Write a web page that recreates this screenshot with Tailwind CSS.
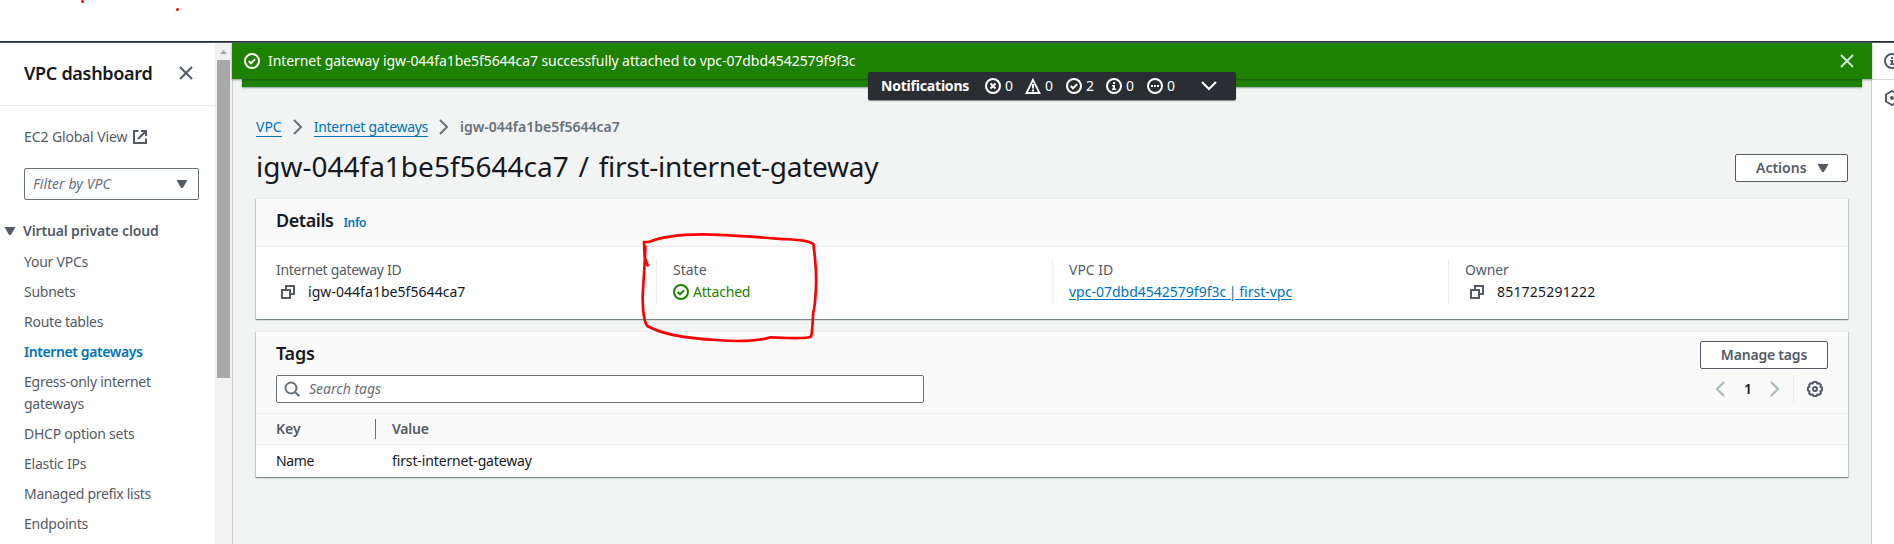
<!DOCTYPE html>
<html lang="en">
<head>
<meta charset="utf-8">
<title>VPC dashboard</title>
<script src="https://cdn.jsdelivr.net/npm/@tailwindcss/browser@4"></script>
</head>
<body class="relative flex h-[544px] w-[1894px] flex-col overflow-hidden bg-white font-['Noto_Sans',sans-serif] text-[14px] leading-[22px] text-[#16191f]">

<svg class="hidden">
  <defs>
    <symbol id="check" viewBox="0 0 16 16"><g fill="none" stroke="currentColor" stroke-width="2"><circle cx="8" cy="8" r="7"/><path d="M4.7 8l2.3 2.3 4.2-4.2"/></g></symbol>
    <symbol id="err" viewBox="0 0 16 16"><g fill="none" stroke="currentColor" stroke-width="2"><circle cx="8" cy="8" r="7"/><path d="M5.500 5.500l5 5M10.500 5.500l-5 5"/></g></symbol>
    <symbol id="warn" viewBox="0 0 16 16"><path d="M8 1.800l6.500 13.200h-13z" fill="none" stroke="currentColor" stroke-width="1.800"/><path d="M8 6v4.500M8 11.500v2" stroke="currentColor" stroke-width="2"/></symbol>
    <symbol id="info" viewBox="0 0 16 16"><circle cx="8" cy="8" r="7" fill="none" stroke="currentColor" stroke-width="2"/><path d="M7 4h2v2H7zM6 7h3v3.500h1V12H6v-1.500h1V8.500H6z" fill="currentColor"/></symbol>
    <symbol id="prog" viewBox="0 0 16 16"><circle cx="8" cy="8" r="7" fill="none" stroke="currentColor" stroke-width="2"/><path d="M4 7h2v2H4zM7 7h2v2H7zM10 7h2v2h-2z" fill="currentColor"/></symbol>
    <symbol id="close" viewBox="0 0 16 16"><path d="M2 2l12 12M14 2L2 14" fill="none" stroke="currentColor" stroke-width="2"/></symbol>
    <symbol id="copy" viewBox="0 0 16 16"><g fill="none" stroke="currentColor" stroke-width="2"><path d="M2 6h8v8H2z"/><path d="M6 6V2h8v8h-4"/></g></symbol>
    <symbol id="caret" viewBox="0 0 10 8"><path d="M0 0h10v1L5.800 8H4.200L0 1z" fill="currentColor"/></symbol>
    <symbol id="right" viewBox="0 0 16 16"><path d="M4 1l7 7-7 7" fill="none" stroke="currentColor" stroke-width="2"/></symbol>
  </defs>
</svg>

<div class="h-[43px] shrink-0 border-b border-[#545b64]"><div class="h-[42px] border-b border-[#232f3e]"></div></div>

<div class="flex min-h-0 flex-1">
  <nav class="flex w-[215px] shrink-0 flex-col text-[#545b64]">
    <div class="flex h-[63px] items-center justify-between border-b border-[#eaeded] pr-[21px] pb-[2px] pl-6">
      <h2 class="text-[18px] font-semibold tracking-[-0.3px] text-[#16191f]">VPC dashboard</h2>
      <svg class="size-4"><use href="#close"/></svg>
    </div>
    <div class="mt-5 flex items-center pl-6">
      <span class="tracking-[-0.1px]">EC2 Global View</span>
      <svg class="ml-[5px] size-4" viewBox="0 0 16 16" fill="none" stroke="currentColor" stroke-width="2"><path d="M6.500 2H2v12h12V9.500M9 2h5v5M14 2L6 10"/></svg>
    </div>
    <div class="mt-5 ml-6 flex h-8 w-[175px] items-center justify-between rounded-[2px] border border-[#687078] pr-[11px] pl-2 text-[#687078]">
      <span class="tracking-[0.1px] italic">Filter by VPC</span>
      <svg class="h-2 w-[10px] text-[#545b64]"><use href="#caret"/></svg>
    </div>
    <div class="mt-5 flex items-center pl-[5px]">
      <svg class="h-2 w-[10px]"><use href="#caret"/></svg>
      <span class="ml-2 font-semibold tracking-[-0.15px]">Virtual private cloud</span>
    </div>
    <ul class="mt-[9px] flex flex-col gap-2 pl-6 tracking-[-0.25px]">
      <li>Your VPCs</li>
      <li>Subnets</li>
      <li>Route tables</li>
      <li class="font-semibold tracking-[-0.41px] text-[#0073bb]">Internet gateways</li>
      <li>Egress-only internet<br>gateways</li>
      <li>DHCP option sets</li>
      <li>Elastic IPs</li>
      <li class="tracking-[-0.3px]">Managed prefix lists</li>
      <li>Endpoints</li>
    </ul>
  </nav>

  <div class="flex w-[17px] shrink-0 flex-col items-center bg-[#f1f1f1]">
    <svg class="mt-[7px] h-1 w-[7px]" viewBox="0 0 7 4"><path d="M3.500 0L7 4H0z" fill="#a3a3a3"/></svg>
    <div class="mt-[6px] h-[318px] w-[13px] bg-[#a8a8a8]"></div>
  </div>

  <main class="relative flex w-[1640px] shrink-0 flex-col border-x border-[#c8cccd] bg-[#f2f3f3]">
    <div class="relative z-10 -mx-px flex h-9 shrink-0 items-center bg-[#1d8102] px-3 pb-px text-white shadow-[0_1px_2px_rgba(0,28,36,0.4)]">
      <svg class="size-4"><use href="#check"/></svg>
      <span class="ml-2 tracking-[-0.07px]">Internet gateway igw-044fa1be5f5644ca7 successfully attached to vpc-07dbd4542579f9f3c</span>
      <svg class="mr-[5px] ml-auto size-4 text-[#d5e6d0]"><use href="#close"/></svg>
    </div>
    <div class="mx-[9px] h-2 shrink-0 bg-[#1d8102] shadow-[0_1px_2px_rgba(0,28,36,0.4)]"></div>

    <div class="absolute top-[29px] left-[635px] z-20 flex h-7 w-[368px] items-center rounded-[2px] bg-[#2a2e33] pl-[13px] text-white shadow-[0_1px_1px_rgba(0,28,36,0.5)]">
      <span class="w-[104px] font-bold tracking-[-0.2px]">Notifications</span>
      <span class="flex w-10 items-center gap-1"><svg class="size-4"><use href="#err"/></svg>0</span>
      <span class="flex w-[41px] items-center gap-1"><svg class="size-4"><use href="#warn"/></svg>0</span>
      <span class="flex w-10 items-center gap-1"><svg class="size-4"><use href="#check"/></svg>2</span>
      <span class="flex w-[41px] items-center gap-1"><svg class="size-4"><use href="#info"/></svg>0</span>
      <span class="flex w-[54px] items-center gap-1"><svg class="size-4"><use href="#prog"/></svg>0</span>
      <svg class="size-4" viewBox="0 0 16 16"><path d="M1 4l7 7 7-7" fill="none" stroke="currentColor" stroke-width="2"/></svg>
    </div>

    <div class="flex flex-col px-[23px] pt-[29px]">
      <div class="flex h-[22px] items-center text-[#687078]">
        <a class="h-[21px] self-start border-b border-[#0073bb] leading-[21px] text-[#0073bb]">VPC</a>
        <svg class="mx-2 size-4"><use href="#right"/></svg>
        <a class="h-[21px] self-start border-b border-[#0073bb] leading-[21px] tracking-[-0.29px] text-[#0073bb]">Internet gateways</a>
        <svg class="mx-2 size-4"><use href="#right"/></svg>
        <span class="font-semibold">igw-044fa1be5f5644ca7</span>
      </div>
      <div class="mt-[10px] flex h-9 items-start justify-between">
        <h1 class="text-[28px] leading-9 [word-spacing:2.5px]">igw-044fa1be5f5644ca7 / <span class="tracking-[-0.27px]">first-internet-gateway</span></h1>
        <button class="mt-[6px] flex h-7 w-[113px] items-center justify-between rounded-[2px] border border-[#545b64] bg-white pr-[19px] pl-5 font-semibold text-[#545b64]"><span>Actions</span><svg class="h-2 w-[10px]"><use href="#caret"/></svg></button>
      </div>

      <section class="mt-[14px] h-[121px] border-t border-[#eaeded] bg-white shadow-[0_1px_1px_0_rgba(0,28,36,0.3),1px_1px_1px_0_rgba(0,28,36,0.15),-1px_1px_1px_0_rgba(0,28,36,0.15)]">
        <div class="flex h-12 items-baseline border-b border-[#eaeded] bg-[#fafafa] pt-[10px] pl-5">
          <h2 class="text-[18px] font-semibold tracking-[-0.45px]">Details</h2>
          <a class="ml-[10px] text-[12px] font-semibold tracking-[-0.3px] text-[#0073bb]">Info</a>
        </div>
        <div class="mt-3 flex h-11 pl-1">
          <div class="w-[396px] shrink-0 pl-4">
            <div class="tracking-[-0.3px] text-[#545b64]">Internet gateway ID</div>
            <div class="flex items-center tracking-[0.05px]"><svg class="mr-3 ml-1 size-4 text-[#545b64]"><use href="#copy"/></svg>igw-044fa1be5f5644ca7</div>
          </div>
          <div class="w-[396px] shrink-0 border-l border-[#eaeded] pl-4">
            <div class="text-[#545b64]">State</div>
            <div class="flex items-center tracking-[-0.19px] text-[#1d8102]"><svg class="mr-1 size-4"><use href="#check"/></svg>Attached</div>
          </div>
          <div class="w-[396px] shrink-0 border-l border-[#eaeded] pl-4">
            <div class="text-[#545b64]">VPC ID</div>
            <a class="text-[#0073bb] underline underline-offset-2 [word-spacing:-1px]">vpc-07dbd4542579f9f3c | first-vpc</a>
          </div>
          <div class="w-[396px] shrink-0 border-l border-[#eaeded] pl-4">
            <div class="tracking-[-0.1px] text-[#545b64]">Owner</div>
            <div class="flex items-center tracking-[0.2px]"><svg class="mr-3 ml-1 size-4 text-[#545b64]"><use href="#copy"/></svg>851725291222</div>
          </div>
        </div>
      </section>

      <section class="mt-3 h-[146px] border-t border-[#eaeded] bg-white shadow-[0_1px_1px_0_rgba(0,28,36,0.3),1px_1px_1px_0_rgba(0,28,36,0.15),-1px_1px_1px_0_rgba(0,28,36,0.15)]">
        <div class="h-[82px] border-b border-[#eaeded] bg-[#fafafa] px-5 pt-[9px]">
          <div class="flex h-7 items-center justify-between">
            <h2 class="pb-1 text-[18px] font-semibold tracking-[-0.2px]">Tags</h2>
            <button class="h-7 w-32 rounded-[2px] border border-[#545b64] bg-white font-semibold tracking-[-0.2px] text-[#545b64]">Manage tags</button>
          </div>
          <div class="mt-[6px] flex h-7 items-center justify-between">
            <div class="flex h-7 w-[648px] items-center rounded-[2px] border border-[#687078] bg-white pl-[7px] text-[#687078]">
              <svg class="mr-[9px] size-4" viewBox="0 0 16 16" fill="none" stroke="currentColor" stroke-width="2"><circle cx="7" cy="7" r="5.500"/><path d="M10.800 10.800l4.500 4.500"/></svg>
              <span class="italic">Search tags</span>
            </div>
            <div class="flex h-7 items-center pr-[5px]">
              <svg class="size-4 text-[#aab7b8]" viewBox="0 0 16 16"><path d="M12 1L5 8l7 7" fill="none" stroke="currentColor" stroke-width="2"/></svg>
              <span class="w-[39px] pl-px text-center font-semibold">1</span>
              <svg class="mr-[10px] size-4 text-[#aab7b8]"><use href="#right"/></svg>
              <div class="mr-[13px] h-7 w-px bg-[#eaeded]"></div>
              <svg class="size-4 text-[#545b64]" viewBox="0 0 16 16" fill="none" stroke="currentColor" stroke-width="2"><path d="M6.500 1h3l.8 1.600 2-.3 1.500 1.500-.3 2L15 6.500v3l-1.500.8.3 2-1.500 1.500-2-.3L9.500 15h-3l-.8-1.500-2 .3-1.500-1.500.3-2L1 9.500v-3l1.500-.8-.3-2 1.500-1.500 2 .3z"/><circle cx="8" cy="8" r="2"/></svg>
            </div>
          </div>
        </div>
        <div class="flex h-[31px] items-center border-b border-[#eaeded] bg-[#fafafa] pl-5 font-semibold text-[#545b64]">
          <span class="w-[99px]">Key</span>
          <div class="mr-4 h-5 w-px bg-[#687078]"></div>
          <span class="tracking-[-0.2px]">Value</span>
        </div>
        <div class="flex h-8 items-center pl-5">
          <span class="w-[116px] tracking-[-0.4px]">Name</span>
          <span class="tracking-[-0.13px]">first-internet-gateway</span>
        </div>
      </section>
    </div>
  </main>

  <aside class="w-[22px] shrink-0 overflow-hidden text-[#545b64]">
    <div class="h-[37px] border-b border-[#d5dbdb] pt-[10px] pl-3"><svg class="size-4"><use href="#info"/></svg></div>
    <div class="pt-[10px] pl-3"><svg class="size-4" viewBox="0 0 16 16" fill="none" stroke="currentColor" stroke-width="2"><path d="M8 1l6 3.500v7L8 15l-6-3.500v-7z"/><circle cx="8" cy="8" r="2" fill="currentColor" stroke="none"/></svg></div>
  </aside>
</div>

<!-- Hand-drawn annotation -->
<svg class="absolute top-[220px] left-[620px] z-30 h-[130px] w-[220px]" viewBox="0 0 660 390" fill="none" stroke="#fe0000" stroke-width="8" stroke-linecap="round" stroke-linejoin="round">
  <path d="M83 136L74 112 72 66H86C130 48 180 43 245 43C310 43 390 50 460 55C520 60 560 58 580 72C585 110 590 150 588 200C586 240 582 270 580 275C577 310 578 335 573 350C560 358 500 354 452 352C410 365 340 365 290 360C210 356 130 345 82 318C72 305 68 270 68 230C70 180 74 150 76 80"/>
</svg>
<div class="absolute top-0 left-[81px] z-30 size-[3px] rounded-full bg-[#fe0000]"></div>
<div class="absolute top-2 left-[176px] z-30 size-[3px] rounded-full bg-[#fe0000]"></div>
</body>
</html>
